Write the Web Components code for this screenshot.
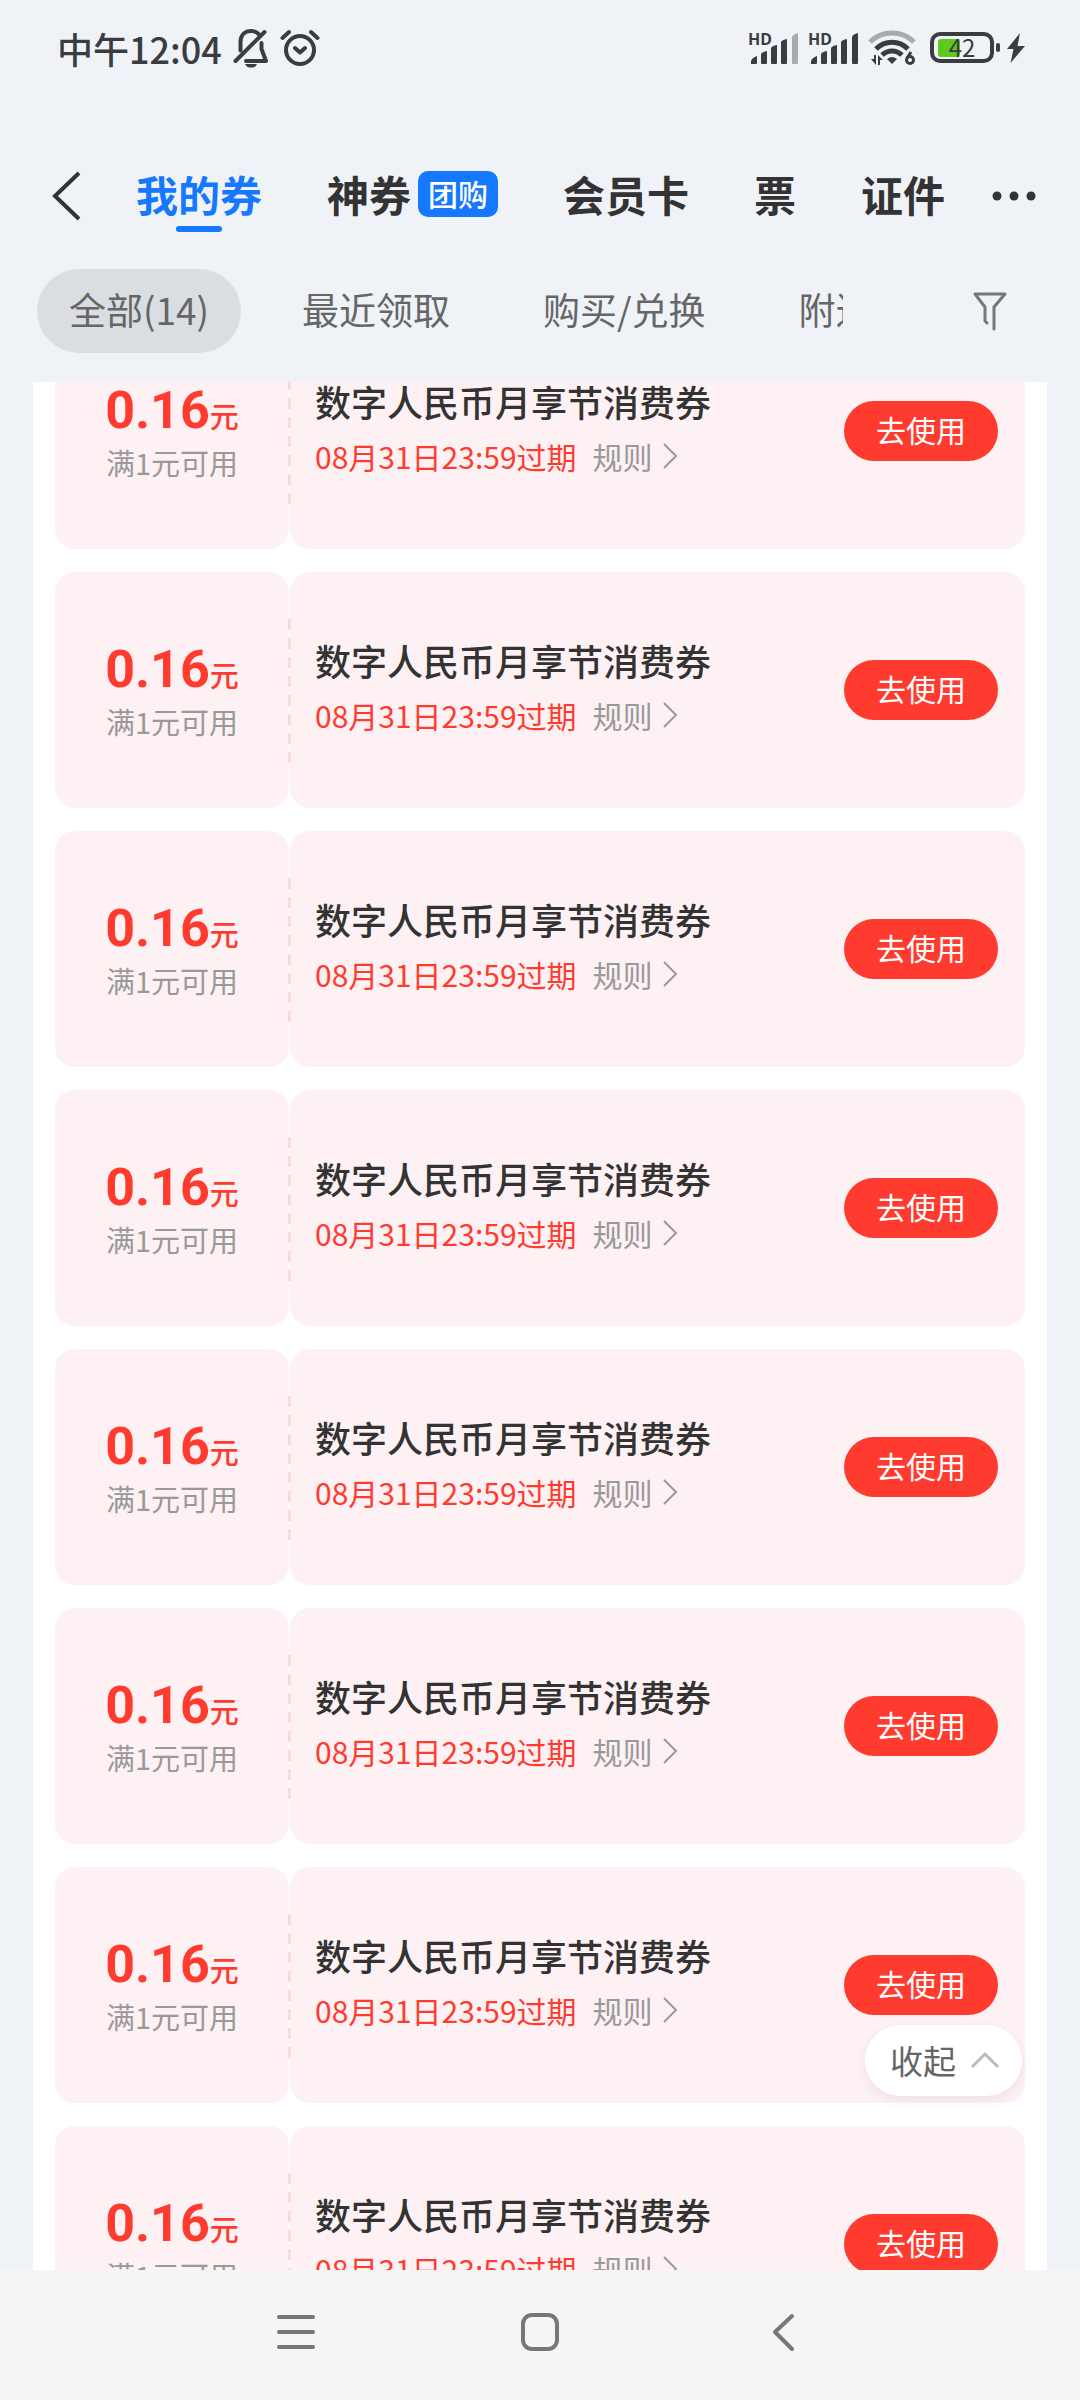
<!DOCTYPE html>
<html lang="zh-CN">
<head>
<meta charset="utf-8">
<meta name="viewport" content="width=device-width, initial-scale=1">
<title>我的券</title>
<style>
  :root {
    --page-background: #eff3f8;
    --panel-background: #ffffff;
    --ticket-background: #fef1f3;
    --ticket-dash: #fbdadf;
    --primary: #1677ff;
    --danger: #ff3b30;
    --text: #333333;
    --text-secondary: #666666;
    --text-muted: #999999;
    --nav-background: #f5f5f5;
  }
  html, body {
    height: 100%;
  }
  body {
    margin: 0;
    display: flex;
    flex-direction: column;
    background: var(--page-background);
    color: var(--text);
    font-family: "Noto Sans CJK SC", "Noto Sans", sans-serif;
  }
</style>
</head>
<body>
<status-bar time="中午12:04" battery="42"></status-bar>
<wallet-header>
  <wallet-tab active>我的券</wallet-tab>
  <wallet-tab badge="团购">神券</wallet-tab>
  <wallet-tab>会员卡</wallet-tab>
  <wallet-tab>票</wallet-tab>
  <wallet-tab>证件</wallet-tab>
</wallet-header>
<filter-bar>
  <filter-chip active>全部(14)</filter-chip>
  <filter-chip>最近领取</filter-chip>
  <filter-chip>购买/兑换</filter-chip>
  <filter-chip>附近</filter-chip>
</filter-bar>
<coupon-list count="8" offset="69"></coupon-list>
<system-nav></system-nav>

<script>
class StatusBar extends HTMLElement {
  constructor() {
    super();
    this.attachShadow({ mode: "open" });
  }

  connectedCallback() {
    this.shadowRoot.innerHTML = `
  <style>
    :host {
      display: flex;
      flex: none;
      align-items: center;
      justify-content: space-between;
      height: 96px;
      padding: 0 54px 0 57px;
      color: #3b3c41;
    }
    .group {
      display: flex;
      align-items: center;
    }
    .left { gap: 11px; }
    .right { gap: 9px; }
    .time {
      font-size: 36px;
      line-height: 48px;
      font-weight: 500;
    }
    .signal {
      display: grid;
    }
    .signal > * { grid-area: 1 / 1; }
    .hd {
      font: 700 16px/16px "Noto Sans", sans-serif;
    }
    .wifi { margin-right: 5px; }
    .battery {
      display: grid;
      place-items: center start;
    }
    .battery > * { grid-area: 1 / 1; }
    .level {
      width: 64px;
      padding-bottom: 2px;
      text-align: center;
      font-size: 24px;
      line-height: 28px;
    }
    svg { display: block; fill: currentColor; }
  </style>
  <div class="group left">
    <span class="time">${this.getAttribute("time")}</span>
    <svg width="36" height="40" viewBox="0 0 36 40" fill="none">
      <g fill="none" stroke="currentColor" stroke-width="4" stroke-linecap="round" stroke-linejoin="round">
        <path d="M7.500 22.500V14C7.500 7 12 3 18 3C21 3 23.500 4 25.500 6"/>
        <path d="M2.500 33L31.500 4"/>
        <path d="M28.500 15V21L33 33H13" />
      </g>
      <path d="M12 36h12c-1 2.500-3 3.600-6 3.600s-5-1.100-6-3.600z"/>
    </svg>
    <svg width="40" height="38" viewBox="0 0 40 38">
      <g fill="none" stroke="currentColor" stroke-width="4" stroke-linecap="round" stroke-linejoin="round">
        <circle cx="20" cy="21" r="14"/>
        <path d="M15 19l5 4.500l5-4.500M2.500 9L9 3M37.500 9L31 3"/>
      </g>
    </svg>
  </div>
  <div class="group right">
    ${this.signal(0.4)}
    ${this.signal(1)}
    <svg class="wifi" width="48" height="36" viewBox="0 0 48 36">
      <g fill="none" stroke="currentColor" stroke-width="5">
        <path d="M2 12C14 0 34 0 46 12" opacity=".4"/>
        <path d="M8 19C17 10 31 10 40 19"/>
        <path d="M14 25C20 19.500 28 19.500 34 25"/>
      </g>
      <path d="M19 29q5-4 10 0l-5 5z"/>
      <path d="M3 29h3v-4h2v10zM10 35V25l5 5h-3v5z"/>
      <g fill="none" stroke="currentColor" stroke-width="3">
        <circle cx="42" cy="30" r="3.500"/>
        <path d="M43 22l-4 6"/>
      </g>
    </svg>
    <div class="battery">
      <svg width="96" height="32" viewBox="0 0 96 32">
        <rect x="8" y="7" width="22" height="18" rx="3" fill="#5fc91f"/>
        <rect x="2" y="2" width="60" height="27" rx="8" fill="none" stroke="currentColor" stroke-width="4"/>
        <rect x="66" y="11" width="4" height="9" rx="2"/>
        <path d="M90 1L77 17h6.500l-3 14L95 14h-7.500z"/>
      </svg>
      <span class="level">${this.getAttribute("battery")}</span>
    </div>
  </div>
`;
  }

  // Five rising bars, the last one dims when reception is partial
  signal(lastOpacity) {
    return `
    <div class="signal">
      <span class="hd">HD</span>
      <svg width="51" height="34" viewBox="0 0 51 34">
        <path d="M3 33v-3q1-3 6-5v7q0 1-1 1z"/>
        <path d="M13 32V23q1-2 6-3v12q0 1-1 1h-4q-1 0-1-1z"/>
        <path d="M23 32V17q1-2 6-3v18q0 1-1 1h-4q-1 0-1-1z"/>
        <path d="M33 32V11q1-2 6-3v24q0 1-1 1h-4q-1 0-1-1z"/>
        <path d="M44 32V6q1-3 6-4v30q0 1-1 1h-4q-1 0-1-1z" opacity="${lastOpacity}"/>
      </svg>
    </div>`;
  }
}

class WalletHeader extends HTMLElement {
  constructor() {
    super();
    this.attachShadow({ mode: "open" });
    this.shadowRoot.innerHTML = `
  <style>
    :host {
      display: flex;
      flex: none;
      align-items: center;
      height: 112px;
      margin-top: 44px;
      padding: 0 42px 0 51px;
    }
    button {
      padding: 0;
      border: none;
      background: none;
      color: var(--text);
      cursor: pointer;
    }
    svg { display: block; }
    nav {
      display: flex;
      gap: 65px;
      margin: 0 auto 0 55px;
    }
  </style>
  <button aria-label="返回">
    <svg width="30" height="50" viewBox="0 0 30 50" fill="none" stroke="currentColor" stroke-width="4">
      <path d="M28 2L4 25L28 48"/>
    </svg>
  </button>
  <nav><slot></slot></nav>
  <button aria-label="更多">
    <svg width="48" height="12" viewBox="0 0 48 12" fill="currentColor">
      <circle cx="7" cy="6" r="4.500"/><circle cx="24" cy="6" r="4.500"/><circle cx="41" cy="6" r="4.500"/>
    </svg>
  </button>
`;
  }
}

class WalletTab extends HTMLElement {
  constructor() {
    super();
    this.attachShadow({ mode: "open" });
  }

  connectedCallback() {
    const badge = this.getAttribute("badge");
    this.shadowRoot.innerHTML = `
  <style>
    :host {
      display: block;
      position: relative;
    }
    button {
      display: flex;
      align-items: center;
      gap: 7px;
      height: 72px;
      padding: 0 0 4px;
      border: none;
      background: none;
      color: var(--text);
      font: inherit;
      font-size: 42px;
      line-height: 60px;
      font-weight: 700;
      white-space: nowrap;
      cursor: pointer;
    }
    :host([active]) button { color: var(--primary); }
    :host([active])::after {
      content: "";
      position: absolute;
      bottom: 0;
      left: 50%;
      width: 46px;
      height: 6px;
      margin-left: -23px;
      border-radius: 3px;
      background: var(--primary);
    }
    .badge {
      padding: 0 10px 2px;
      border-radius: 10px;
      background: var(--primary);
      color: #fff;
      font-size: 30px;
      line-height: 44px;
      font-weight: 500;
    }
  </style>
  <button><slot></slot>${badge ? `<span class="badge">${badge}</span>` : ""}</button>
`;
  }
}

class FilterBar extends HTMLElement {
  constructor() {
    super();
    this.attachShadow({ mode: "open" });
    this.shadowRoot.innerHTML = `
  <style>
    :host {
      display: flex;
      flex: none;
      align-items: center;
      justify-content: space-between;
      padding: 17px 72px 29px 37px;
    }
    .chips {
      display: flex;
      flex: 1;
      gap: 29px;
      margin-right: 129px;
      overflow: hidden;
    }
    button {
      flex: none;
      padding: 0;
      border: none;
      background: none;
      color: #777;
      cursor: pointer;
    }
    svg { display: block; }
  </style>
  <div class="chips"><slot></slot></div>
  <button aria-label="筛选">
    <svg width="36" height="42" viewBox="0 0 36 42" fill="none" stroke="currentColor" stroke-width="3" stroke-linecap="round" stroke-linejoin="round">
      <path d="M15 33L13 31V17L3 4H33L22 17V39"/>
    </svg>
  </button>
`;
  }
}

class FilterChip extends HTMLElement {
  constructor() {
    super();
    this.attachShadow({ mode: "open" });
    this.shadowRoot.innerHTML = `
  <style>
    :host {
      display: block;
      flex: none;
    }
    button {
      height: 84px;
      padding: 0 32px 4px;
      border: none;
      border-radius: 42px;
      background: none;
      color: var(--text-secondary);
      font: inherit;
      font-size: 37px;
      white-space: nowrap;
      cursor: pointer;
    }
    :host([active]) button { background: #dadde2; }
  </style>
  <button><slot></slot></button>
`;
  }
}

class CouponCard extends HTMLElement {
  constructor() {
    super();
    this.attachShadow({ mode: "open" });
    this.shadowRoot.innerHTML = `
  <style>
    :host {
      display: grid;
      grid-template-columns: 234px 1fr;
      gap: 1px;
      position: relative;
      height: 236px;
    }
    /* tear line between the two halves */
    :host::before {
      content: "";
      position: absolute;
      top: 47px;
      bottom: 42px;
      left: 233px;
      width: 3px;
      background: repeating-linear-gradient(var(--ticket-dash) 0 11px, transparent 11px 19px);
    }
    .value, .detail {
      border-radius: 20px;
      background: var(--ticket-background);
      box-sizing: border-box;
    }
    .value {
      display: flex;
      flex-direction: column;
      align-items: center;
      justify-content: center;
      padding-top: 8px;
      white-space: nowrap;
    }
    .amount {
      display: flex;
      align-items: baseline;
      height: 54px;
      color: var(--danger);
      font-family: Roboto, "Noto Sans CJK SC", sans-serif;
      font-size: 52px;
      line-height: 54px;
      font-weight: 700;
    }
    .amount small {
      font-size: 29px;
      line-height: 30px;
      font-weight: 500;
    }
    .limit {
      color: var(--text-muted);
      font-size: 29px;
      line-height: 48px;
    }
    .detail {
      display: flex;
      align-items: center;
      justify-content: space-between;
      padding: 0 27px 0 25px;
    }
    .info { padding-bottom: 6px; }
    h3 {
      margin: 0;
      font-size: 36px;
      line-height: 56px;
      font-weight: 500;
    }
    .meta {
      display: flex;
      align-items: center;
      gap: 16px;
      font-size: 30px;
      line-height: 54px;
      color: var(--danger);
    }
    a {
      display: flex;
      align-items: center;
      gap: 8px;
      color: var(--text-muted);
      text-decoration: none;
    }
    .use {
      flex: none;
      width: 154px;
      height: 60px;
      padding: 0 0 4px;
      border: none;
      border-radius: 30px;
      background: var(--danger);
      color: #fff;
      font: inherit;
      font-size: 30px;
      line-height: 40px;
      cursor: pointer;
    }
  </style>
  <div class="value">
    <div class="amount"><slot name="amount"></slot><small>元</small></div>
    <div class="limit"><slot name="limit"></slot></div>
  </div>
  <div class="detail">
    <div class="info">
      <h3><slot></slot></h3>
      <div class="meta">
        <slot name="expires"></slot>
        <a href="#rules">规则
          <svg width="18" height="28" viewBox="0 0 18 28" fill="none" stroke="currentColor" stroke-width="2"><path d="M3 2L15 14L3 26"/></svg>
        </a>
      </div>
    </div>
    <button class="use">去使用</button>
  </div>
`;
  }
}

class CouponList extends HTMLElement {
  constructor() {
    super();
    this.attachShadow({ mode: "open" });
  }

  get count() {
    return parseInt(this.getAttribute("count")) || 0;
  }

  get offset() {
    return parseInt(this.getAttribute("offset")) || 0;
  }

  connectedCallback() {
    const card = `
    <coupon-card>
      <span slot="amount">0.16</span>
      <span slot="limit">满1元可用</span>
      数字人民币月享节消费券
      <span slot="expires">08月31日23:59过期</span>
    </coupon-card>`;

    this.shadowRoot.innerHTML = `
  <style>
    :host {
      display: flex;
      flex: 1;
      min-height: 0;
      position: relative;
      margin: 0 33px;
      background: var(--panel-background);
    }
    .scroller {
      display: flex;
      flex: 1;
      flex-direction: column;
      gap: 23px;
      padding: 0 22px;
      overflow-y: auto;
      scrollbar-width: none;
    }
    coupon-card { flex: none; }
    .collapse {
      position: absolute;
      right: 25px;
      bottom: 174px;
      display: flex;
      align-items: center;
      gap: 14px;
      height: 71px;
      padding: 0 22px 2px 25px;
      border: none;
      border-radius: 36px;
      background: #fff;
      box-shadow: 0 4px 12px rgba(90, 30, 40, 0.08);
      color: var(--text-secondary);
      font: inherit;
      font-size: 33px;
      cursor: pointer;
    }
  </style>
  <div class="scroller">${card.repeat(this.count)}</div>
  <button class="collapse">收起
    <svg width="30" height="18" viewBox="0 0 30 18" fill="none" stroke="#bbb" stroke-width="3"><path d="M2 16L15 3L28 16"/></svg>
  </button>
`;
    this.shadowRoot.querySelector(".scroller").scrollTop = this.offset;
  }
}

class SystemNav extends HTMLElement {
  constructor() {
    super();
    this.attachShadow({ mode: "open" });
    this.shadowRoot.innerHTML = `
  <style>
    :host {
      display: flex;
      flex: none;
      align-items: center;
      justify-content: center;
      gap: 204px;
      height: 130px;
      box-sizing: border-box;
      padding-bottom: 6px;
      background: var(--nav-background);
    }
    button {
      padding: 0;
      border: none;
      background: none;
      color: #777;
      cursor: pointer;
    }
    svg {
      display: block;
      fill: none;
      stroke: currentColor;
      stroke-width: 4;
      stroke-linecap: round;
      stroke-linejoin: round;
    }
  </style>
  <button aria-label="菜单">
    <svg width="40" height="40" viewBox="0 0 40 40"><path d="M3 5h34M3 20h34M3 35h34"/></svg>
  </button>
  <button aria-label="主页">
    <svg width="40" height="40" viewBox="0 0 40 40"><rect x="3" y="3" width="34" height="34" rx="9"/></svg>
  </button>
  <button aria-label="后退">
    <svg width="40" height="40" viewBox="0 0 40 40"><path d="M28 4L11 20L28 37"/></svg>
  </button>
`;
  }
}

customElements.define("status-bar", StatusBar);
customElements.define("wallet-header", WalletHeader);
customElements.define("wallet-tab", WalletTab);
customElements.define("filter-bar", FilterBar);
customElements.define("filter-chip", FilterChip);
customElements.define("coupon-card", CouponCard);
customElements.define("system-nav", SystemNav);
// last, so that everything around the list has its height when it scrolls
customElements.define("coupon-list", CouponList);
</script>
</body>
</html>
